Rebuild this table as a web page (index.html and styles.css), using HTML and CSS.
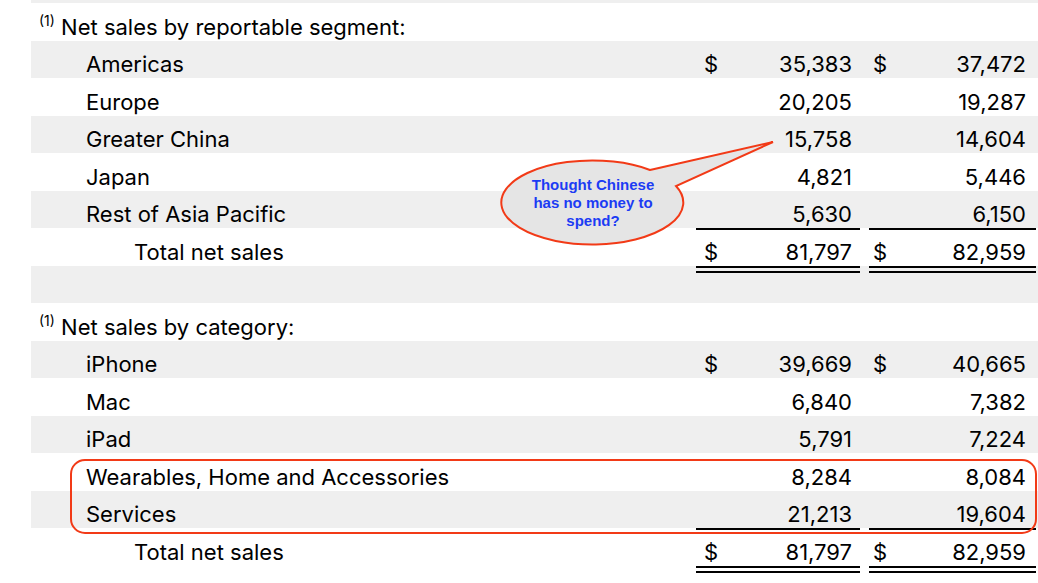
FILE: index.html
```html
<!DOCTYPE html>
<html lang="en">
<head>
<meta charset="utf-8">
<title>Net sales</title>
<link rel="stylesheet" href="styles.css">
</head>
<body>
<div class="sheet">
  <div class="strip shade"></div>

  <div class="row">
    <div class="cell label head"><span class="note">(1)</span> Net sales by reportable segment:</div>
  </div>
  <div class="row shade">
    <div class="cell label">Americas</div>
    <div class="cell val v1"><span>$</span><span class="num">35,383</span></div>
    <div class="cell val v2"><span>$</span><span class="num">37,472</span></div>
  </div>
  <div class="row">
    <div class="cell label">Europe</div>
    <div class="cell val v1"><span class="num">20,205</span></div>
    <div class="cell val v2"><span class="num">19,287</span></div>
  </div>
  <div class="row shade">
    <div class="cell label">Greater China</div>
    <div class="cell val v1"><span class="num">15,758</span></div>
    <div class="cell val v2"><span class="num">14,604</span></div>
  </div>
  <div class="row">
    <div class="cell label">Japan</div>
    <div class="cell val v1"><span class="num">4,821</span></div>
    <div class="cell val v2"><span class="num">5,446</span></div>
  </div>
  <div class="row shade">
    <div class="cell label">Rest of Asia Pacific</div>
    <div class="cell val v1"><span class="num">5,630</span></div>
    <div class="cell val v2"><span class="num">6,150</span></div>
  </div>
  <div class="row">
    <div class="cell label total">Total net sales</div>
    <div class="cell val v1 sum"><span>$</span><span class="num">81,797</span></div>
    <div class="cell val v2 sum"><span>$</span><span class="num">82,959</span></div>
  </div>
  <div class="row shade"></div>

  <div class="row">
    <div class="cell label head"><span class="note">(1)</span> Net sales by category:</div>
  </div>
  <div class="row shade">
    <div class="cell label">iPhone</div>
    <div class="cell val v1"><span>$</span><span class="num">39,669</span></div>
    <div class="cell val v2"><span>$</span><span class="num">40,665</span></div>
  </div>
  <div class="row">
    <div class="cell label">Mac</div>
    <div class="cell val v1"><span class="num">6,840</span></div>
    <div class="cell val v2"><span class="num">7,382</span></div>
  </div>
  <div class="row shade">
    <div class="cell label">iPad</div>
    <div class="cell val v1"><span class="num">5,791</span></div>
    <div class="cell val v2"><span class="num">7,224</span></div>
  </div>
  <div class="row">
    <div class="cell label">Wearables, Home and Accessories</div>
    <div class="cell val v1"><span class="num">8,284</span></div>
    <div class="cell val v2"><span class="num">8,084</span></div>
  </div>
  <div class="row shade">
    <div class="cell label">Services</div>
    <div class="cell val v1"><span class="num">21,213</span></div>
    <div class="cell val v2"><span class="num">19,604</span></div>
  </div>
  <div class="row">
    <div class="cell label total">Total net sales</div>
    <div class="cell val v1 sum"><span>$</span><span class="num">81,797</span></div>
    <div class="cell val v2 sum"><span>$</span><span class="num">82,959</span></div>
  </div>

  <div class="highlight"></div>

  <div class="callout">
    <svg class="bubble" width="290" height="120" viewBox="0 0 290 120">
      <path d="M155 35 L278 7 L181 51 A91 42 0 1 1 155 35 Z" fill="#e5e5e5" stroke="#f23a17" stroke-width="2" stroke-linejoin="miter"/>
    </svg>
    <div class="callout-text">Thought Chinese<br>has no money to<br>spend?</div>
  </div>
</div>
</body>
</html>
```

FILE: styles.css
```css
html, body {
  margin: 0;
  padding: 0;
  background: #ffffff;
}

body {
  font-family: Inter, "Liberation Sans", Arial, sans-serif;
  font-size: 22px;
  color: #000000;
}

.sheet {
  position: relative;
  width: 1038px;
  height: 583px;
  overflow: hidden;
}

.strip {
  height: 3px;
  margin-left: 31px;
}

.shade {
  background: #efefef;
}

.row {
  display: grid;
  grid-template-columns: 656px 164px 167px;
  column-gap: 9px;
  height: 37.5px;
  margin-left: 31px;
}

.cell {
  box-sizing: border-box;
  position: relative;
  padding-top: 10.5px;
  line-height: 26px;
  white-space: nowrap;
}

.label {
  padding-left: 55px;
}

.label.total {
  padding-left: 103px;
}

.label.head {
  padding-left: 8px;
}

.note {
  font-size: 14px;
  vertical-align: 9px;
  line-height: 0;
}

.val {
  display: flex;
  justify-content: space-between;
}

.num {
  margin-left: auto;
}

.v1 {
  padding-left: 8px;
  padding-right: 8px;
}

.v2 {
  padding-left: 4px;
  padding-right: 10px;
}

.sum::before {
  content: "";
  position: absolute;
  left: 0;
  right: 0;
  top: 0;
  height: 2px;
  background: #000;
}

.sum::after {
  content: "";
  position: absolute;
  left: 0;
  right: 0;
  top: calc(100% + 0.5px);
  height: 3px;
  border-top: 2px solid #000;
  border-bottom: 2px solid #000;
}

.highlight {
  position: absolute;
  left: 70px;
  top: 459px;
  width: 967px;
  height: 75px;
  box-sizing: border-box;
  border: 2px solid #f23a17;
  border-radius: 15px;
}

.callout {
  position: absolute;
  left: 495px;
  top: 135px;
  width: 290px;
  height: 120px;
}

.bubble {
  position: absolute;
  left: 0;
  top: 0;
}

.callout-text {
  position: absolute;
  left: 0;
  top: 41px;
  width: 196px;
  text-align: center;
  font-family: "Liberation Sans", Arial, sans-serif;
  font-weight: bold;
  font-size: 15px;
  line-height: 18px;
  color: #1c3cf4;
}
```
